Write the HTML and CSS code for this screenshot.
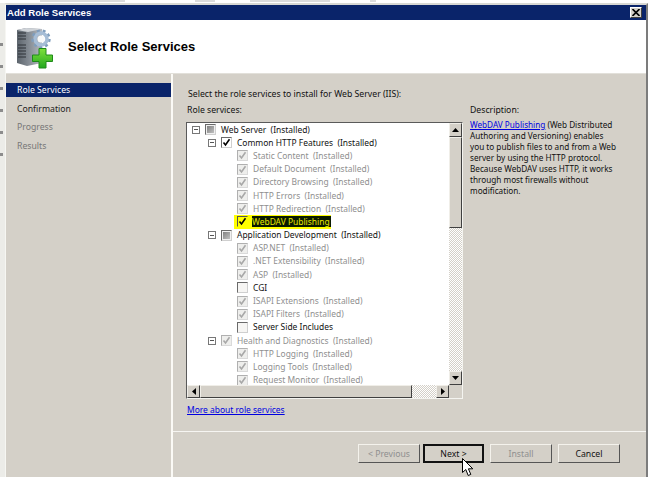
FILE: index.html
```html
<!DOCTYPE html>
<html lang="en">
<head>
<meta charset="utf-8">
<title>Add Role Services</title>
<link rel="stylesheet" href="styles.css">
</head>
<body>
<svg class="defs" width="0" height="0" aria-hidden="true">
  <symbol id="tick" viewBox="0 0 9 9"><path d="M1.5 4.5 L3.5 7 L7.5 1.2" fill="none" stroke="currentColor" stroke-width="1.6"/></symbol>
  <symbol id="up" viewBox="0 0 7 4"><path d="M3.5 0 L7 4 H0Z" fill="currentColor"/></symbol>
  <symbol id="down" viewBox="0 0 7 4"><path d="M0 0 H7 L3.5 4Z" fill="currentColor"/></symbol>
  <symbol id="left" viewBox="0 0 4 7"><path d="M4 0 V7 L0 3.5Z" fill="currentColor"/></symbol>
  <symbol id="right" viewBox="0 0 4 7"><path d="M0 0 L4 3.5 L0 7Z" fill="currentColor"/></symbol>
</svg>
<div class="desk">
  <div class="topstrip"><i class="s1"></i><i class="s2"></i><i class="s3"></i><i class="s4"></i></div>
  <div class="main">
    <div class="leftstrip"><i></i><i></i><i></i><i></i><i></i><i></i></div>
    <div class="dialog">
      <div class="titlebar">
        <span class="title">Add Role Services</span>
        <span class="close"><svg width="8" height="7" viewBox="0 0 8 7"><path d="M0.5 0 L7.5 7 M7.5 0 L0.5 7" stroke="#000" stroke-width="1.6"/></svg></span>
      </div>
      <header class="head">
        <svg class="logo" width="38" height="42" viewBox="0 0 38 42">
          <defs>
            <linearGradient id="srv" x1="0" x2="1"><stop offset="0" stop-color="#5c646c"/><stop offset=".55" stop-color="#8b929a"/><stop offset="1" stop-color="#b5bac0"/></linearGradient>
            <linearGradient id="grn" x1="0" y1="0" x2="0" y2="1"><stop offset="0" stop-color="#7fe03c"/><stop offset="1" stop-color="#22a81e"/></linearGradient>
          </defs>
          <path d="M1 3 L10 1 L26 2 V36 L11 39 L1 36Z" fill="url(#srv)"/>
          <path d="M1 3 L10 1 L26 2 L12 5Z" fill="#cfd3d8"/>
          <path d="M2 6 H10 M2 9 H10 M2 12 H10 M2 18 H10 M2 21 H10 M2 24 H10 M2 27 H10 M2 30 H10" stroke="#2e3338" stroke-width="1.2"/>
          <circle cx="25" cy="12" r="6" fill="none" stroke="#a6bdd6" stroke-width="3.5"/>
          <circle cx="25" cy="12" r="8.6" fill="none" stroke="#7f9dbd" stroke-width="2.2" stroke-dasharray="3 3"/>
          <circle cx="25" cy="12" r="3.6" fill="#f8f9fa"/>
          <path d="M23 21.5 H30 V28 H36.5 V34.5 H30 V41 H23 V34.5 H16.5 V28 H23Z" fill="url(#grn)" stroke="#1f8a1a"/>
        </svg>
        <h1 class="heading">Select Role Services</h1>
      </header>
      <div class="body">
        <nav class="side">
          <div class="step sel">Role Services</div>
          <div class="step">Confirmation</div>
          <div class="step dim">Progress</div>
          <div class="step dim">Results</div>
        </nav>
        <section class="content">
          <p class="intro">Select the role services to install for Web Server (IIS):</p>
          <div class="cols">
            <div class="leftcol">
              <div class="label">Role services:</div>
              <div class="treebox">
                <div class="tree">
                  <div class="row l0"><span class="exp"></span><span class="cb mixed"></span><span class="t">Web Server  (Installed)</span></div>
                  <div class="row l1"><span class="exp"></span><span class="cb on"><svg><use href="#tick"/></svg></span><span class="t">Common HTTP Features  (Installed)</span></div>
                  <div class="row l2 off"><span class="cb dis"><svg><use href="#tick"/></svg></span><span class="t">Static Content  (Installed)</span></div>
                  <div class="row l2 off"><span class="cb dis"><svg><use href="#tick"/></svg></span><span class="t">Default Document  (Installed)</span></div>
                  <div class="row l2 off"><span class="cb dis"><svg><use href="#tick"/></svg></span><span class="t">Directory Browsing  (Installed)</span></div>
                  <div class="row l2 off"><span class="cb dis"><svg><use href="#tick"/></svg></span><span class="t">HTTP Errors  (Installed)</span></div>
                  <div class="row l2 off"><span class="cb dis"><svg><use href="#tick"/></svg></span><span class="t">HTTP Redirection  (Installed)</span></div>
                  <div class="row l2 mark"><span class="cb hl"><svg><use href="#tick"/></svg></span><span class="t">WebDAV Publishing</span></div>
                  <div class="row l1"><span class="exp"></span><span class="cb mixed"></span><span class="t">Application Development  (Installed)</span></div>
                  <div class="row l2 off"><span class="cb dis"><svg><use href="#tick"/></svg></span><span class="t">ASP.NET  (Installed)</span></div>
                  <div class="row l2 off"><span class="cb dis"><svg><use href="#tick"/></svg></span><span class="t">.NET Extensibility  (Installed)</span></div>
                  <div class="row l2 off"><span class="cb dis"><svg><use href="#tick"/></svg></span><span class="t">ASP  (Installed)</span></div>
                  <div class="row l2"><span class="cb"></span><span class="t">CGI</span></div>
                  <div class="row l2 off"><span class="cb dis"><svg><use href="#tick"/></svg></span><span class="t">ISAPI Extensions  (Installed)</span></div>
                  <div class="row l2 off"><span class="cb dis"><svg><use href="#tick"/></svg></span><span class="t">ISAPI Filters  (Installed)</span></div>
                  <div class="row l2"><span class="cb"></span><span class="t">Server Side Includes</span></div>
                  <div class="row l1 off"><span class="exp"></span><span class="cb dis"><svg><use href="#tick"/></svg></span><span class="t">Health and Diagnostics  (Installed)</span></div>
                  <div class="row l2 off"><span class="cb dis"><svg><use href="#tick"/></svg></span><span class="t">HTTP Logging  (Installed)</span></div>
                  <div class="row l2 off"><span class="cb dis"><svg><use href="#tick"/></svg></span><span class="t">Logging Tools  (Installed)</span></div>
                  <div class="row l2 off"><span class="cb dis"><svg><use href="#tick"/></svg></span><span class="t">Request Monitor  (Installed)</span></div>
                </div>
                <div class="vbar">
                  <span class="sbtn vb"><svg width="7" height="4"><use href="#up"/></svg></span>
                  <span class="thumb vthumb"></span>
                  <span class="hatch"></span>
                  <span class="sbtn vb"><svg width="7" height="4"><use href="#down"/></svg></span>
                </div>
                <div class="hbar">
                  <span class="sbtn hb"><svg width="4" height="7"><use href="#left"/></svg></span>
                  <span class="thumb hthumb"></span>
                  <span class="hatch"></span>
                  <span class="sbtn hb"><svg width="4" height="7"><use href="#right"/></svg></span>
                </div>
                <div class="corner"></div>
              </div>
              <a class="link more" href="#">More about role services</a>
            </div>
            <aside class="desc">
              <div class="desc-label">Description:</div>
              <p class="para"><a class="link" href="#">WebDAV Publishing</a> (Web Distributed Authoring and Versioning) enables you to publish files to and from a Web server by using the HTTP protocol. Because WebDAV uses HTTP, it works through most firewalls without modification.</p>
            </aside>
          </div>
          <footer class="foot">
            <button class="btn" disabled>&lt; Previous</button>
            <button class="btn def">Next &gt;</button>
            <button class="btn" disabled>Install</button>
            <button class="btn">Cancel</button>
          </footer>
        </section>
      </div>
    </div>
  </div>
</div>
<svg class="cursor" width="13" height="19" viewBox="0 0 13 19"><path d="M0.5 0.5 V14.5 L3.8 11.5 L6.2 17.5 L8.8 16.4 L6.4 10.8 H10.8Z" fill="#fff" stroke="#000"/></svg>
</body>
</html>
```
FILE: styles.css
```css
* { box-sizing: border-box; }
html, body { margin: 0; padding: 0; }
body {
  position: relative;
  width: 652px;
  height: 477px;
  overflow: hidden;
  background: #fff;
  font: 8.7px/12px "Noto Sans", "Liberation Sans", Arial, sans-serif;
  color: #111;
}
.defs { position: absolute; }
.desk { display: flex; flex-direction: column; height: 477px; }

.topstrip { display: flex; height: 3px; flex: none; }
.topstrip i { height: 2px; background: #dcdcdc; }
.s1 { width: 85px; margin-left: 40px; }
.s2 { width: 20px; margin-left: 70px; }
.s3 { width: 80px; margin-left: 35px; }
.s4 { width: 6px; margin-left: 40px; }

.main { display: flex; flex: 1; min-height: 0; }
.leftstrip {
  width: 5px;
  flex: none;
  background: #ecece8;
  display: flex;
  flex-direction: column;
  gap: 19px;
  padding-top: 40px;
}
.leftstrip i { height: 3px; width: 3px; background: #8c8c8c; }

.dialog {
  width: 643px;
  flex: none;
  display: flex;
  flex-direction: column;
  background: #d4d0c8;
  border-left: 1px solid #f6f6f2;
  border-top: 2px solid #d8d8d4;
  border-right: 2px solid #7c7c7c;
}

.titlebar {
  height: 15px;
  flex: none;
  display: flex;
  align-items: center;
  justify-content: space-between;
  padding: 0 4px 0 1px;
  background: #0a246a;
  color: #fff;
}
.title { font-family: "Liberation Sans", Arial, sans-serif; font-weight: 700; font-size: 9.6px; }
.close {
  width: 12px;
  height: 11px;
  display: flex;
  align-items: center;
  justify-content: center;
  background: #d4d0c8;
  border: 1px solid;
  border-color: #fff #404040 #404040 #fff;
}

.head {
  height: 54px;
  flex: none;
  display: flex;
  align-items: center;
  padding: 0 0 0 10px;
  background: #fff;
  border-bottom: 1px solid #e2e0da;
}
.logo { flex: none; margin-top: 2px; }
.heading {
  margin: 0 0 0 14px;
  font-family: "Liberation Sans", Arial, sans-serif;
  font-size: 13px;
  line-height: 16px;
  font-weight: 700;
  color: #000;
}

.body { flex: 1; display: flex; min-height: 0; }
.side {
  width: 167px;
  flex: none;
  padding-top: 9px;
  border-right: 2px solid #fbfaf6;
  display: flex;
  flex-direction: column;
  gap: 4.5px;
}
.step { height: 14px; line-height: 15px; padding-left: 11px; color: #222; }
.step.sel { background: #0a246a; color: #fff; }
.step.dim { color: #777; }

.content { flex: 1; display: flex; flex-direction: column; min-width: 0; padding-top: 14px; }
.intro { margin: 0 0 4px 15px; }
.cols { display: flex; padding-left: 13px; }
.leftcol { width: 284px; flex: none; }
.label { padding-left: 1px; }

.treebox {
  width: 277px;
  height: 277px;
  margin-top: 6px;
  display: grid;
  grid-template-columns: 1fr 13px;
  grid-template-rows: 1fr 13px;
  background: #fff;
  border: 1px solid;
  border-color: #5a5a5a #f4f4f0 #f4f4f0 #5a5a5a;
}
.tree { overflow: hidden; font-size: 8.45px; }
.row {
  display: flex;
  align-items: center;
  height: 13.2px;
  white-space: pre;
  color: #111;
}
.row.off { color: #8f8f8f; }
.l0 { padding-left: 5px; }
.l1 { padding-left: 21px; }
.l2 { padding-left: 50px; }
.exp {
  width: 8px;
  height: 8px;
  flex: none;
  margin-right: 5px;
  border: 1px solid #777;
  background: linear-gradient(#555, #555) center / 4px 1px no-repeat;
}
.cb {
  width: 11px;
  height: 11px;
  flex: none;
  margin-right: 5px;
  display: flex;
  align-items: center;
  justify-content: center;
  background: #f6f5f3;
  border: 1px solid;
  border-color: #6a6a6a #cfcfcf #cfcfcf #6a6a6a;
}
.cb svg { width: 9px; height: 9px; display: block; }
.cb.on { background: #fff; color: #000; }
.cb.mixed { background: linear-gradient(135deg, #777, #c8c8c8); box-shadow: inset 0 0 0 1px #f0f0f0; }
.cb.dis { border-color: #b0b0b0 #dadada #dadada #b0b0b0; background: #eeeeec; color: #a8a8a8; }
.cb.hl { background: #ffff00; color: #000; border-color: #555 #ffff00 #ffff00 #555; }
.row.mark { position: relative; color: #e8e800; }
.row.mark .cb { margin-right: 4px; }
.row.mark .t { background: #0a1a00; padding-right: 1px; line-height: 11px; height: 11px; }
.row.mark::before {
  content: "";
  position: absolute;
  left: 47px;
  top: 0;
  width: 97px;
  height: 14px;
  background: #ffff00;
}
.row.mark > * { position: relative; }

.vbar { display: flex; flex-direction: column; grid-column: 2; grid-row: 1; }
.hbar { display: flex; grid-column: 1; grid-row: 2; }
.corner { background: #d4d0c8; }
.sbtn, .thumb {
  flex: none;
  display: flex;
  align-items: center;
  justify-content: center;
  background: #d4d0c8;
  color: #000;
  border: 1px solid;
  border-color: #f0eee8 #404040 #404040 #f0eee8;
}
.vb { height: 14px; }
.hb { width: 13px; }
.vthumb { height: 91px; }
.hthumb { width: 212px; }
.hatch {
  flex: 1;
  background: repeating-conic-gradient(#fff 0 25%, #d4d0c8 0 50%) 0 0 / 2px 2px;
}

.link { color: #0000e0; text-decoration: underline; }
.more { display: block; margin-top: 5px; padding-left: 1px; font-size: 8.45px; }
.desc { width: 148px; flex: none; }
.para { margin: 3px 0 0; line-height: 11px; font-size: 8.2px; }

.foot {
  margin-top: auto;
  height: 46px;
  flex: none;
  display: flex;
  justify-content: flex-end;
  gap: 6px;
  padding: 12px 26px 0 0;
  border-top: 1px solid #f6f5f2;
}
.btn {
  width: 62px;
  height: 19px;
  padding: 0;
  font: inherit;
  color: #111;
  background: #d4d0c8;
  border: 1px solid;
  border-color: #f4f2ec #555 #555 #f4f2ec;
}
.btn:disabled { color: #8f8f8f; }
.btn.def { width: 61px; border: 2px solid #111; margin-left: -3px; }

.cursor { position: absolute; left: 462px; top: 458px; }
```
